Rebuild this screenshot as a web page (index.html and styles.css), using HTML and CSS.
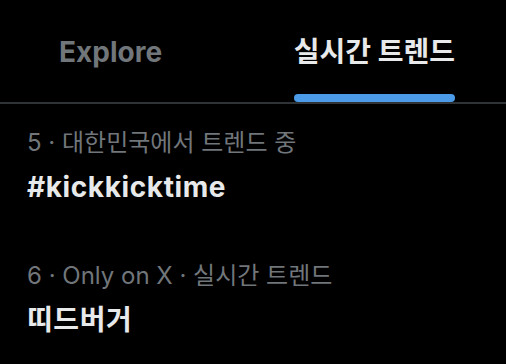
FILE: index.html
```html
<!DOCTYPE html>
<html lang="ko">
<head>
    <meta charset="UTF-8">
    <meta name="viewport" content="width=device-width, initial-scale=1.0">
    <title>실시간 트렌드</title>
    <link rel="stylesheet" href="styles.css">
</head>
<body>
<header class="tabs">
    <a class="tab" href="#">Explore</a>
    <a class="tab active" href="#">실시간 트렌드<span class="indicator"></span></a>
</header>

<section class="trends">
    <div class="trend">
        <p class="meta">5 · 대한민국에서 트렌드 중</p>
        <p class="title">#kickkicktime</p>
    </div>
    <div class="trend">
        <p class="meta">6 · Only on X · 실시간 트렌드</p>
        <p class="title">띠드버거</p>
    </div>
</section>
</body>
</html>
```

FILE: styles.css
```css
/* General Styles */
body {
    margin: 0;
    background-color: #000;
    font-family: Inter, "Noto Sans CJK KR", sans-serif;
    color: #e7e9ea;
}

/* Tab bar */
.tabs {
    display: flex;
    justify-content: space-between;
    align-items: flex-end;
    height: 102px;
    padding: 0 51px 0 59px;
    border-bottom: 2px solid #2f3336;
}

.tab {
    position: relative;
    padding-bottom: 32px;
    font-size: 28px;
    font-weight: 700;
    line-height: 36px;
    color: #71767b;
    text-decoration: none;
}

.tab.active {
    color: #e7e9ea;
}

.indicator {
    position: absolute;
    left: 0;
    right: 0;
    bottom: 0;
    height: 8px;
    border-radius: 4px;
    background-color: #4c9be8;
}

/* Trend rows */
.trends {
    padding: 0 27px;
}

.trend {
    padding: 22px 0 33px;
}

.meta {
    margin: 0;
    font-size: 24px;
    line-height: 34px;
    color: #71767b;
}

.title {
    margin: 10px 0 0;
    font-size: 28px;
    font-weight: 700;
    line-height: 34px;
    letter-spacing: 0.6px;
    color: #e7e9ea;
}
```
